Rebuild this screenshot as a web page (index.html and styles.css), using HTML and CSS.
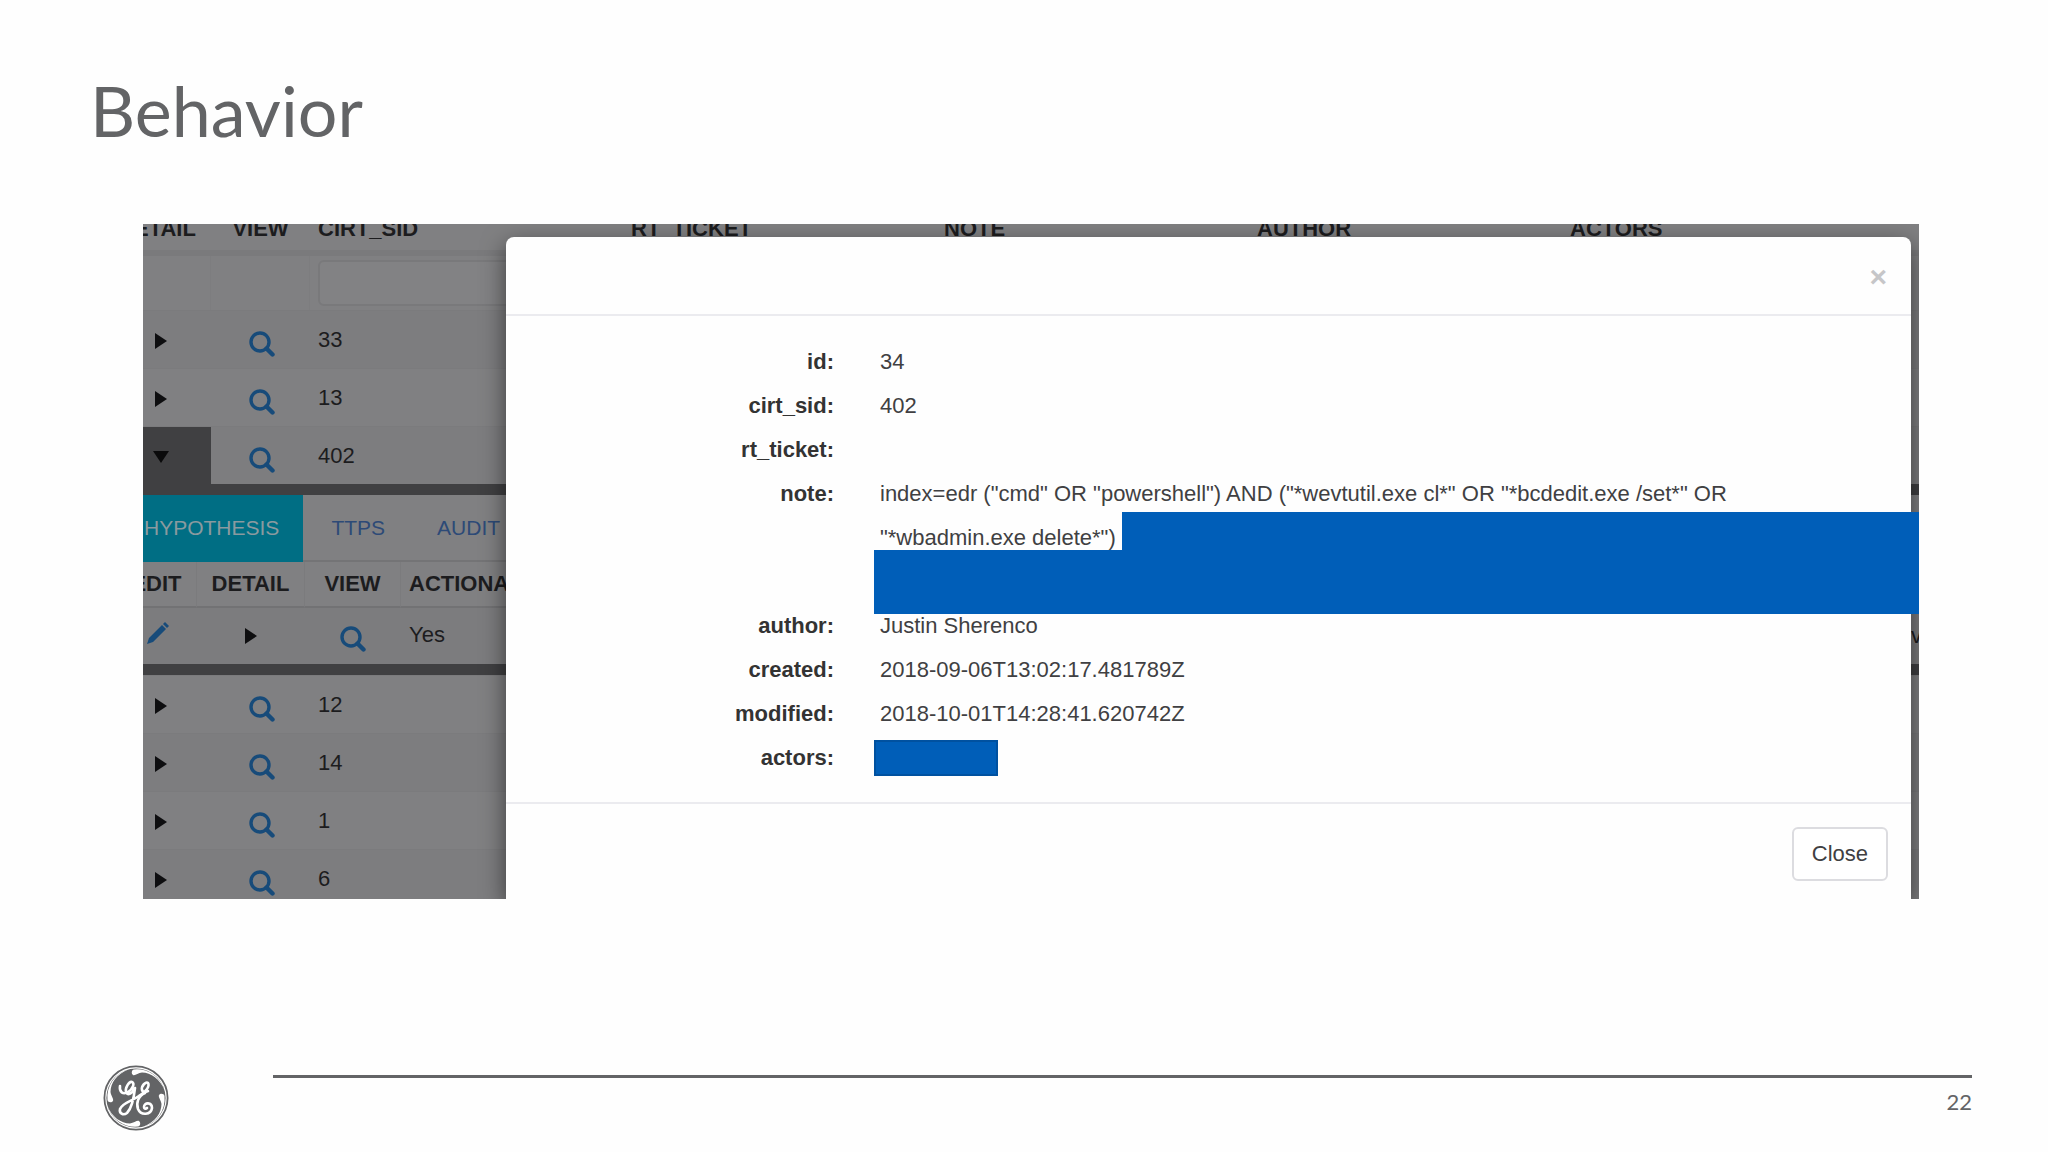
FILE: index.html
```html
<!DOCTYPE html>
<html lang="en">
<head>
<meta charset="utf-8">
<title>Behavior</title>
<link rel="stylesheet" href="styles.css">
</head>
<body>
<svg class="defs" aria-hidden="true">
  <symbol id="search" viewBox="0 0 26 26"><circle cx="11" cy="11" r="9" fill="none" stroke="currentColor" stroke-width="3.4"/><path d="M17.5 17.5l6 6" stroke="currentColor" stroke-width="4.4" stroke-linecap="round"/></symbol>
  <symbol id="right" viewBox="0 0 12 16"><path d="M0 0l12 8-12 8z" fill="currentColor"/></symbol>
  <symbol id="down" viewBox="0 0 16 12"><path d="M0 0h16l-8 12z" fill="currentColor"/></symbol>
  <symbol id="pencil" viewBox="0 0 24 24"><path d="M1 23l2-6 13-13 4 4L7 21zM17 3l2-2 4 4-2 2z" fill="currentColor"/></symbol>
</svg>
<main class="slide">
  <h1>Behavior</h1>
  <section class="shot">
    <table class="grid">
      <colgroup><col class="c-detail"><col class="c-view"><col class="c-data"><col class="c-data"><col class="c-data"><col class="c-data"><col></colgroup>
      <thead>
        <tr class="head"><th class="mid">DETAIL</th><th class="mid">VIEW</th><th>CIRT_SID</th><th>RT_TICKET</th><th>NOTE</th><th>AUTHOR</th><th>ACTORS</th></tr>
        <tr class="filter"><td></td><td></td><td><input type="text" aria-label="Filter CIRT_SID"></td><td></td><td></td><td></td><td></td></tr>
      </thead>
      <tbody>
        <tr class="row odd"><td><svg class="right"><use href="#right"/></svg></td><td class="mid"><svg class="search"><use href="#search"/></svg></td><td>33</td><td></td><td></td><td></td><td></td></tr>
        <tr class="row"><td><svg class="right"><use href="#right"/></svg></td><td class="mid"><svg class="search"><use href="#search"/></svg></td><td>13</td><td></td><td></td><td></td><td></td></tr>
        <tr class="row odd"><td class="open"><svg class="down"><use href="#down"/></svg></td><td class="mid"><svg class="search"><use href="#search"/></svg></td><td>402</td><td></td><td></td><td></td><td></td></tr>
        <tr><td class="expanded" colspan="7">
          <nav class="tabs"><a class="active" href="#hypothesis">HYPOTHESIS</a><a href="#ttps">TTPS</a><a href="#audit">AUDIT</a></nav>
          <table class="inner" id="hypothesis">
            <colgroup><col class="i-edit"><col class="i-detail"><col class="c-view"><col><col class="i-last"></colgroup>
            <thead><tr><th class="mid">EDIT</th><th class="mid">DETAIL</th><th class="mid">VIEW</th><th>ACTIONABLE</th><th></th></tr></thead>
            <tbody><tr><td class="edit"><svg class="pencil"><use href="#pencil"/></svg></td><td class="mid"><svg class="right"><use href="#right"/></svg></td><td class="mid"><svg class="search"><use href="#search"/></svg></td><td>Yes</td><td class="last">v</td></tr></tbody>
          </table>
        </td></tr>
        <tr class="row"><td><svg class="right"><use href="#right"/></svg></td><td class="mid"><svg class="search"><use href="#search"/></svg></td><td>12</td><td></td><td></td><td></td><td></td></tr>
        <tr class="row odd"><td><svg class="right"><use href="#right"/></svg></td><td class="mid"><svg class="search"><use href="#search"/></svg></td><td>14</td><td></td><td></td><td></td><td></td></tr>
        <tr class="row"><td><svg class="right"><use href="#right"/></svg></td><td class="mid"><svg class="search"><use href="#search"/></svg></td><td>1</td><td></td><td></td><td></td><td></td></tr>
        <tr class="row odd"><td><svg class="right"><use href="#right"/></svg></td><td class="mid"><svg class="search"><use href="#search"/></svg></td><td>6</td><td></td><td></td><td></td><td></td></tr>
      </tbody>
    </table>
    <div class="modal" role="dialog" aria-label="Details">
      <header><button class="dismiss" type="button" aria-label="Dismiss">×</button></header>
      <dl>
        <dt>id:</dt><dd>34</dd>
        <dt>cirt_sid:</dt><dd>402</dd>
        <dt>rt_ticket:</dt><dd></dd>
        <dt>note:</dt><dd class="note">index=edr ("cmd" OR "powershell") AND ("*wevtutil.exe cl*" OR "*bcdedit.exe /set*" OR "*wbadmin.exe delete*")<span class="redact upper"></span><span class="redact lower"></span></dd>
        <dt>author:</dt><dd>Justin Sherenco</dd>
        <dt>created:</dt><dd>2018-09-06T13:02:17.481789Z</dd>
        <dt>modified:</dt><dd>2018-10-01T14:28:41.620742Z</dd>
        <dt>actors:</dt><dd><span class="redact small"></span></dd>
      </dl>
      <footer><button class="close" type="button">Close</button></footer>
    </div>
  </section>
  <footer class="base">
    <svg class="logo" viewBox="0 0 66 66" role="img" aria-label="GE">
      <circle cx="33" cy="33" r="31.600" fill="#fff" stroke="#636466" stroke-width="1.800"/>
      <circle cx="33" cy="33" r="29.600" fill="#636466"/>
      <g fill="#fff">
        <path id="swirl" d="M4.500 35A29 29 0 0 1 25 4.500C14 9 7.500 18 7.500 27C8 31 11 34 10 36C8.500 38 5 37.500 4.500 35z"/>
        <use href="#swirl" transform="rotate(90 33 33)"/><use href="#swirl" transform="rotate(180 33 33)"/><use href="#swirl" transform="rotate(270 33 33)"/>
      </g>
      <g fill="none" stroke="#fff" stroke-width="2.600" stroke-linecap="round" stroke-linejoin="round">
        <path d="M17 21C16 27 20 30 25 27C30 24 32 18 29 17C26 16 22 23 23 27C24 31 29 29 32 23C31 32 29 43 24 48C20 51 16 48 17 44C19 38 29 36 36 31C43 27 47 21 45 18C43 16 38 21 39 25C40 28 43 27 45 26"/>
        <path d="M42 28C35 31 33 38 35 44C38 51 48 50 49 43C49 37 41 37 41 42C41 44 43 44 44 43"/>
      </g>
    </svg>
    <div class="rule"><span>22</span></div>
  </footer>
</main>
</body>
</html>
```

FILE: styles.css
```css
* { box-sizing: border-box; }
body { margin: 0; background: #fefefe; font-family: "Liberation Sans", Arial, sans-serif; font-size: 22px; color: #333; }
.defs { position: absolute; width: 0; height: 0; }
.slide { display: flex; flex-direction: column; min-height: 100vh; padding: 70px 76px 21px 90px; }
h1 { margin: 0 0 74px; font: 400 70px/80px Lato, sans-serif; color: #636466; }
.shot { position: relative; overflow: hidden; height: 675px; margin: 0 53px; background: #808082; color: #1c1c1e; }

table { border-collapse: separate; border-spacing: 0; table-layout: fixed; }
th, td { padding: 0 8px; text-align: left; white-space: nowrap; overflow: hidden; line-height: 26px; }
.mid { text-align: center; }
td svg { display: inline-block; vertical-align: middle; }
.grid { width: calc(100% + 40px); margin: -18px 0 0 -40px; }
.c-detail { width: 108px; }
.c-view { width: 96px; }
.c-data { width: 313px; }
.c-detail + .c-view { width: 99px; }
.head th { height: 50px; padding-top: 2px; border-bottom: 6px solid #7a7a7c; overflow: visible; }
.filter td { height: 54px; border-right: 1px solid #7d7d7f; }
.filter input { display: block; width: 100%; height: 46px; border: 2px solid #79797b; border-radius: 6px; background: #828284; }
.row td { height: 58px; border-top: 1px solid #7b7b7d; }
.odd td { background: #7d7d7f; }
.row td:first-child { padding-left: 52px; }
.row .mid { padding-left: 10px; }
.row td.open { background: #404042; color: #0a0a0b; padding-left: 50px; }
.right { width: 12px; height: 16px; color: #0e0e10; }
.down { width: 16px; height: 12px; }
.search { width: 26px; height: 26px; margin-top: 8px; color: #174b7a; }
.pencil { width: 24px; height: 24px; margin-top: -6px; color: #174b7a; }

.expanded { padding: 0 0 0 40px; border: solid #404042; border-width: 11px 0; }
.tabs { display: flex; gap: 4px; border-bottom: 2px solid #747476; font-size: 21px; line-height: 65px; }
.tabs a { padding: 0 24px; color: #2d4a77; text-decoration: none; }
.tabs .active { margin-left: -23px; margin-bottom: -2px; background: #006e84; color: #8a9a9f; }
.inner { width: calc(100% + 26px); margin-left: -26px; }
.i-edit { width: 80px; }
.i-detail { width: 108px; }
.i-last { width: 16px; }
.inner th { height: 46px; border-right: 1px solid #7b7b7d; border-bottom: 2px solid #727274; }
.inner td { height: 56px; padding-bottom: 2px; background: #7c7c7e; }
.inner .edit { padding-left: 29px; }
.inner .last { padding: 0 0 0 8px; }

.modal { position: absolute; inset: 13px 8px 0 363px; display: flex; flex-direction: column; background: #fefefe; border-radius: 8px 8px 0 0; box-shadow: 0 8px 24px rgba(0, 0, 0, .55); color: #404042; }
.modal header { display: flex; justify-content: flex-end; align-items: center; height: 79px; padding: 3px 24px 0; border-bottom: 2px solid #ebebef; }
.modal button { font-family: inherit; cursor: pointer; }
.dismiss { padding: 0; border: 0; background: none; font-size: 30px; font-weight: 700; line-height: 30px; color: #c6c6c8; }
dl { display: grid; grid-template-columns: 328px 1fr; column-gap: 46px; margin: 0; padding: 24px 0 22px; line-height: 44px; }
dt { text-align: right; font-weight: 700; color: #333; }
dd { margin: 0; min-height: 44px; }
.note { position: relative; min-height: 132px; padding-right: 60px; }
.redact { display: block; background: #005eb8; }
.upper { position: absolute; top: 40px; left: 242px; right: -8px; height: 102px; }
.lower { position: absolute; top: 78px; left: -6px; right: -8px; height: 64px; }
.small { width: 124px; height: 36px; margin: 4px -6px; border: 2px solid #0051a0; }
.modal footer { display: flex; justify-content: flex-end; flex: 1; align-items: flex-start; padding: 23px 23px 0; border-top: 2px solid #ebebef; }
.close { height: 54px; padding: 0 18px; border: 2px solid #dcdce0; border-radius: 6px; background: #fff; color: #404042; font-size: 22px; }

.base { display: flex; align-items: flex-start; gap: 104px; margin-top: auto; padding-left: 13px; }
.logo { width: 66px; height: 66px; flex: none; }
.rule { flex: 1; margin-top: 10px; padding-top: 10px; border-top: 3px solid #636466; text-align: right; font: 22px/28px Lato, sans-serif; color: #636466; }
```
